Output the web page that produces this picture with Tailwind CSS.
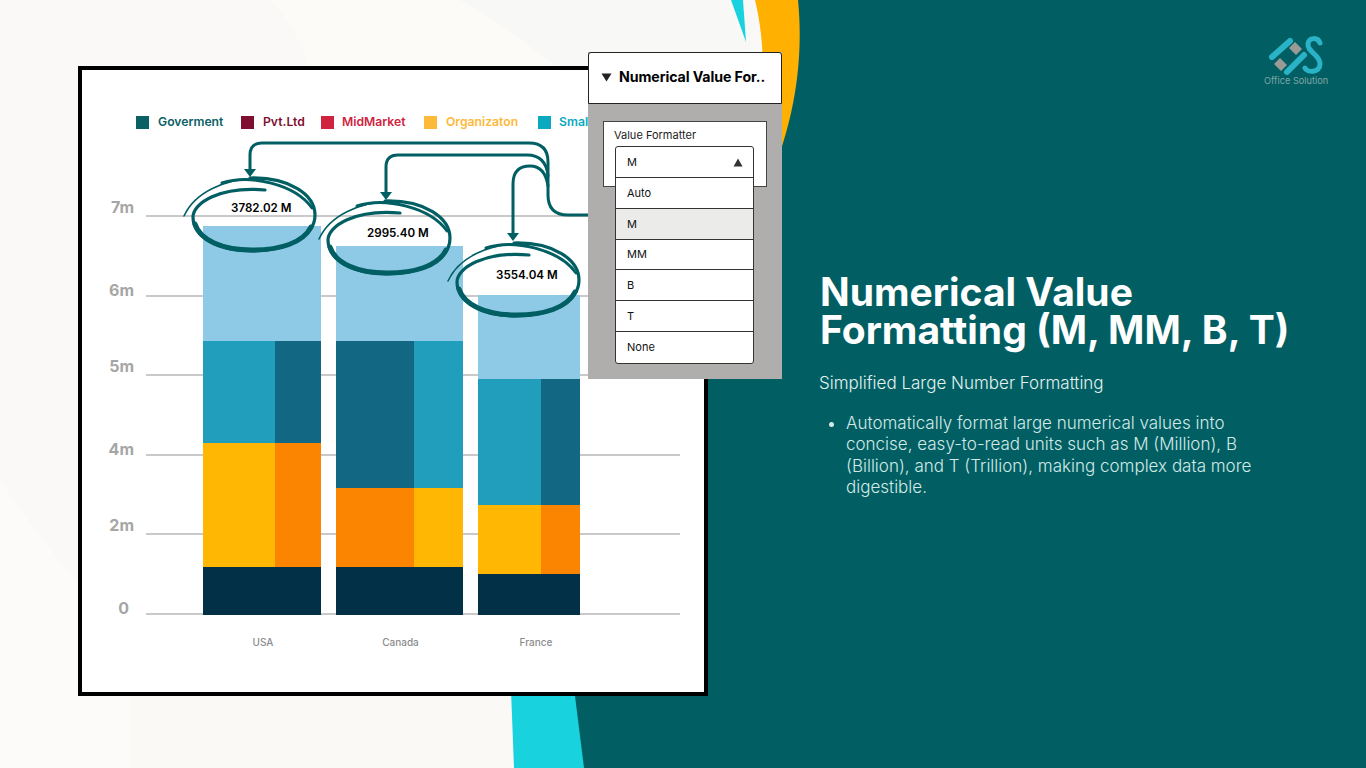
<!DOCTYPE html>
<html lang="en">
<head>
    <meta charset="UTF-8">
    <title>Numerical Value Formatting</title>
    <script src="https://cdn.jsdelivr.net/npm/@tailwindcss/browser@4"></script>
</head>
<body class="w-[1366px] h-[768px] overflow-hidden bg-[#faf9f7] font-['Inter',sans-serif]">
<div class="relative w-[1366px] h-[768px] overflow-hidden">

    <!-- slide background -->
    <svg class="absolute inset-0" width="1366" height="768" viewBox="0 0 1366 768">
        <path d="M270 0 C330 60 320 150 310 250 L700 250 L700 0 Z" fill="#fcfbf7"/>
        <path d="M460 0 C560 60 640 130 710 260 L760 0 Z" fill="#f8f8f7"/>
        <path d="M0 480 C40 540 90 600 130 640 L130 768 L0 768 Z" fill="#fcfbf9"/>
        <path d="M130 696 L510 696 L512 768 L130 768 Z" fill="#fbf9f5"/>
        <path d="M755 0 C772 70 765 170 700 300 L820 300 L820 0 Z" fill="#ffb000"/>
        <path d="M731 0 L746 42 L743 0 Z" fill="#18d3de"/>
        <path d="M511 690 L514 768 L590 768 L580 690 Z" fill="#18d3de"/>
        <path d="M798 0 C804 60 795 130 760 200 C690 340 570 520 575 696 L584 768 L1366 768 L1366 0 Z" fill="#015f63"/>
    </svg>

    <!-- chart card -->
    <div class="absolute left-[78px] top-[66px] w-[630px] h-[630px] border-4 border-black bg-white overflow-hidden">
        <div class="flex items-center pl-[54px] pt-[46px] text-[12.2px] font-semibold whitespace-nowrap h-[59px]">
            <span class="w-[13px] h-[13px] bg-[#0b6063]"></span>
            <span class="ml-[9px] w-[83px] text-[#0b6063]">Goverment</span>
            <span class="w-[13px] h-[13px] bg-[#7f0f30]"></span>
            <span class="ml-[9px] w-[58px] text-[#7f0f30]">Pvt.Ltd</span>
            <span class="w-[13px] h-[13px] bg-[#cf2340]"></span>
            <span class="ml-[8px] w-[82px] text-[#cf2340]">MidMarket</span>
            <span class="w-[13px] h-[13px] bg-[#fdb93a]"></span>
            <span class="ml-[9px] w-[92px] text-[#fdb93a]">Organizaton</span>
            <span class="w-[13px] h-[13px] bg-[#0aa9c0]"></span>
            <span class="ml-[8px] text-[#0aa9c0]">Small</span>
        </div>

        <div class="flex mt-[86px]">
            <div class="w-[52px] text-right text-[16px] leading-[20px] font-bold text-[#a6a6a6]">
                <div class="-mt-[18px] h-[83px]">7m</div>
                <div class="h-[76px]">6m</div>
                <div class="h-[83px]">5m</div>
                <div class="h-[76px]">4m</div>
                <div class="h-[83px]">2m</div>
                <div class="pr-[5px]">0</div>
            </div>

            <div class="relative ml-[12px] w-[534px] h-[400px]">
                <div class="absolute inset-0 flex flex-col justify-between">
                    <div class="h-[2px] bg-[#c9c9c9]"></div>
                    <div class="h-[2px] bg-[#c9c9c9]"></div>
                    <div class="h-[2px] bg-[#c9c9c9]"></div>
                    <div class="h-[2px] bg-[#c9c9c9]"></div>
                    <div class="h-[2px] bg-[#c9c9c9]"></div>
                    <div class="h-[2px] bg-[#c9c9c9]"></div>
                </div>
                <div class="relative flex items-end h-[400px] pl-[57px] gap-[15px]">
                    <div class="w-[118px] flex flex-col">
                        <div class="h-[115px] bg-[#8ecae6]"></div>
                        <div class="h-[102px] flex"><div class="w-[72px] bg-[#219ebc]"></div><div class="flex-1 bg-[#126782]"></div></div>
                        <div class="h-[124px] flex"><div class="w-[72px] bg-[#ffb703]"></div><div class="flex-1 bg-[#fb8500]"></div></div>
                        <div class="h-[48px] bg-[#023047]"></div>
                    </div>
                    <div class="w-[127px] flex flex-col">
                        <div class="h-[95px] bg-[#8ecae6]"></div>
                        <div class="h-[147px] flex"><div class="w-[78px] bg-[#126782]"></div><div class="flex-1 bg-[#219ebc]"></div></div>
                        <div class="h-[79px] flex"><div class="w-[78px] bg-[#fb8500]"></div><div class="flex-1 bg-[#ffb703]"></div></div>
                        <div class="h-[48px] bg-[#023047]"></div>
                    </div>
                    <div class="w-[102px] flex flex-col">
                        <div class="h-[84px] bg-[#8ecae6]"></div>
                        <div class="h-[126px] flex"><div class="w-[63px] bg-[#219ebc]"></div><div class="flex-1 bg-[#126782]"></div></div>
                        <div class="h-[69px] flex"><div class="w-[63px] bg-[#ffb703]"></div><div class="flex-1 bg-[#fb8500]"></div></div>
                        <div class="h-[41px] bg-[#023047]"></div>
                    </div>
                </div>
                <div class="flex mt-[20px] text-[10px] leading-[14px] font-medium text-[#8c8c8c] text-center">
                    <div class="ml-[58px] w-[118px]">USA</div>
                    <div class="ml-[15px] w-[127px]">Canada</div>
                    <div class="ml-[21px] w-[102px]">France</div>
                </div>
            </div>
        </div>
    </div>

    <!-- arrows and hand drawn circles -->
    <svg class="absolute inset-0" width="1366" height="768" viewBox="0 0 1366 768" fill="none" stroke="#015f63" stroke-linecap="round">
        <g stroke-width="3">
            <path d="M590 215 H568 Q548 215 548 195 V162 Q548 143 529 143 H262 Q250 143 250 155 V170"/>
            <path d="M548 176 Q546 155 527 155 H398 Q386 155 386 167 V194"/>
            <path d="M548 186 Q545 166 530 166 Q513 166 513 184 V235"/>
        </g>
        <g fill="#015f63" stroke="none">
            <path d="M244 169 H256 L250 177 Z"/>
            <path d="M380 192 H392 L386 200 Z"/>
            <path d="M507 233 H519 L513 241 Z"/>
        </g>
        <g id="ring1">
            <path stroke-width="1.6" d="M184 216 C195 192 225 179 255 179"/>
            <path stroke-width="3.2" d="M250 178 C290 177 315 195 315 215 C315 238 285 251 252 251 C218 251 193 237 193 217 C193 203 220 186 265 190"/>
            <path stroke-width="5" d="M311 227 C303 243 280 250 252 250 C222 250 200 240 195 224"/>
            <path stroke-width="3" d="M222 183 C250 174 295 184 312 208"/>
        </g>
        <use href="#ring1" x="135" y="23"/>
        <use href="#ring1" x="264" y="65"/>
    </svg>
    <span class="absolute left-[231px] top-[201px] text-[11.6px] leading-[14px] font-semibold text-black">3782.02 M</span>
    <span class="absolute left-[367px] top-[226px] text-[11.6px] leading-[14px] font-semibold text-black">2995.40 M</span>
    <span class="absolute left-[496px] top-[268px] text-[11.6px] leading-[14px] font-semibold text-black">3554.04 M</span>

    <!-- slicer panel -->
    <div class="absolute left-[588px] top-[52px] w-[194px] h-[327px] bg-[#b0aeac]">
        <div class="flex items-center h-[52px] pb-[2px] bg-white border border-[#222] rounded-t-[3px] pl-[12px] whitespace-nowrap">
            <svg width="11" height="9" viewBox="0 0 11 9"><path d="M0.5 0.5 H10.5 L5.5 8.5 Z" fill="#222"/></svg>
            <span class="ml-[7px] text-[14.2px] font-bold text-black tracking-[-0.1px]">Numerical Value For..</span>
        </div>
        <div class="relative mt-[17px] ml-[15px] w-[164px] h-[66px] bg-white border border-[#444] pl-[10px] pt-[6px] text-[11px] leading-[14px] text-[#222]">
            Value Formatter
            <div class="absolute left-[11px] top-[24px] w-[139px] bg-white border border-[#333] rounded-[3px] text-[11px] text-[#111] divide-y divide-[#333] z-10">
                <div class="flex items-center justify-between h-[31px] pl-[11px] pr-[10px]">M
                    <svg width="10" height="9" viewBox="0 0 10 9"><path d="M5 0.5 L9.5 8.5 H0.5 Z" fill="#333"/></svg>
                </div>
                <div class="flex items-center h-[30.8px] pl-[11px]">Auto</div>
                <div class="flex items-center h-[30.8px] pl-[11px] bg-[#ebebea]">M</div>
                <div class="flex items-center h-[30.8px] pl-[11px]">MM</div>
                <div class="flex items-center h-[30.8px] pl-[11px]">B</div>
                <div class="flex items-center h-[30.8px] pl-[11px]">T</div>
                <div class="flex items-center h-[30.8px] pl-[11px]">None</div>
            </div>
        </div>
    </div>

    <!-- logo -->
    <svg class="absolute left-[1260px] top-[30px]" width="70" height="48" viewBox="1260 30 70 48" fill="none">
        <g stroke="#2ab3c6" stroke-width="6" stroke-linecap="round">
            <path d="M1272 57 L1290 41"/>
            <path d="M1287 72 L1304 55"/>
            <path d="M1320 43 C1318 37 1309 37 1308 44 C1307 52 1320 54 1320 64 C1320 73 1307 73 1305 68" stroke-width="5"/>
        </g>
        <path d="M1295 42 L1302 49 L1296 55 L1289 48 Z" fill="#9a9a96"/>
        <path d="M1280 58 L1287 65 L1281 71 L1274 64 Z" fill="#9a9a96"/>
    </svg>
    <span class="absolute left-[1264px] top-[75px] text-[9.2px] leading-[11px] text-[#7fa5a5] whitespace-nowrap">Office Solution</span>

    <!-- copy -->
    <div class="absolute left-[819px] top-[273px] w-[520px]">
        <h1 class="pl-[1px] text-[39px] leading-[38px] font-bold text-white whitespace-nowrap">Numerical Value<br>Formatting (M, MM, B, T)</h1>
        <p class="mt-[22px] text-[17px] leading-[24px] font-light text-[#e3f1ef]">Simplified Large Number Formatting</p>
        <ul class="mt-[18px] ml-[27px] list-disc text-[17px] leading-[21.3px] font-light text-[#d3e9e6] whitespace-nowrap">
            <li>Automatically format large numerical values into<br>concise, easy-to-read units such as M (Million), B<br>(Billion), and T (Trillion), making complex data more<br>digestible.</li>
        </ul>
    </div>
</div>
</body>
</html>
